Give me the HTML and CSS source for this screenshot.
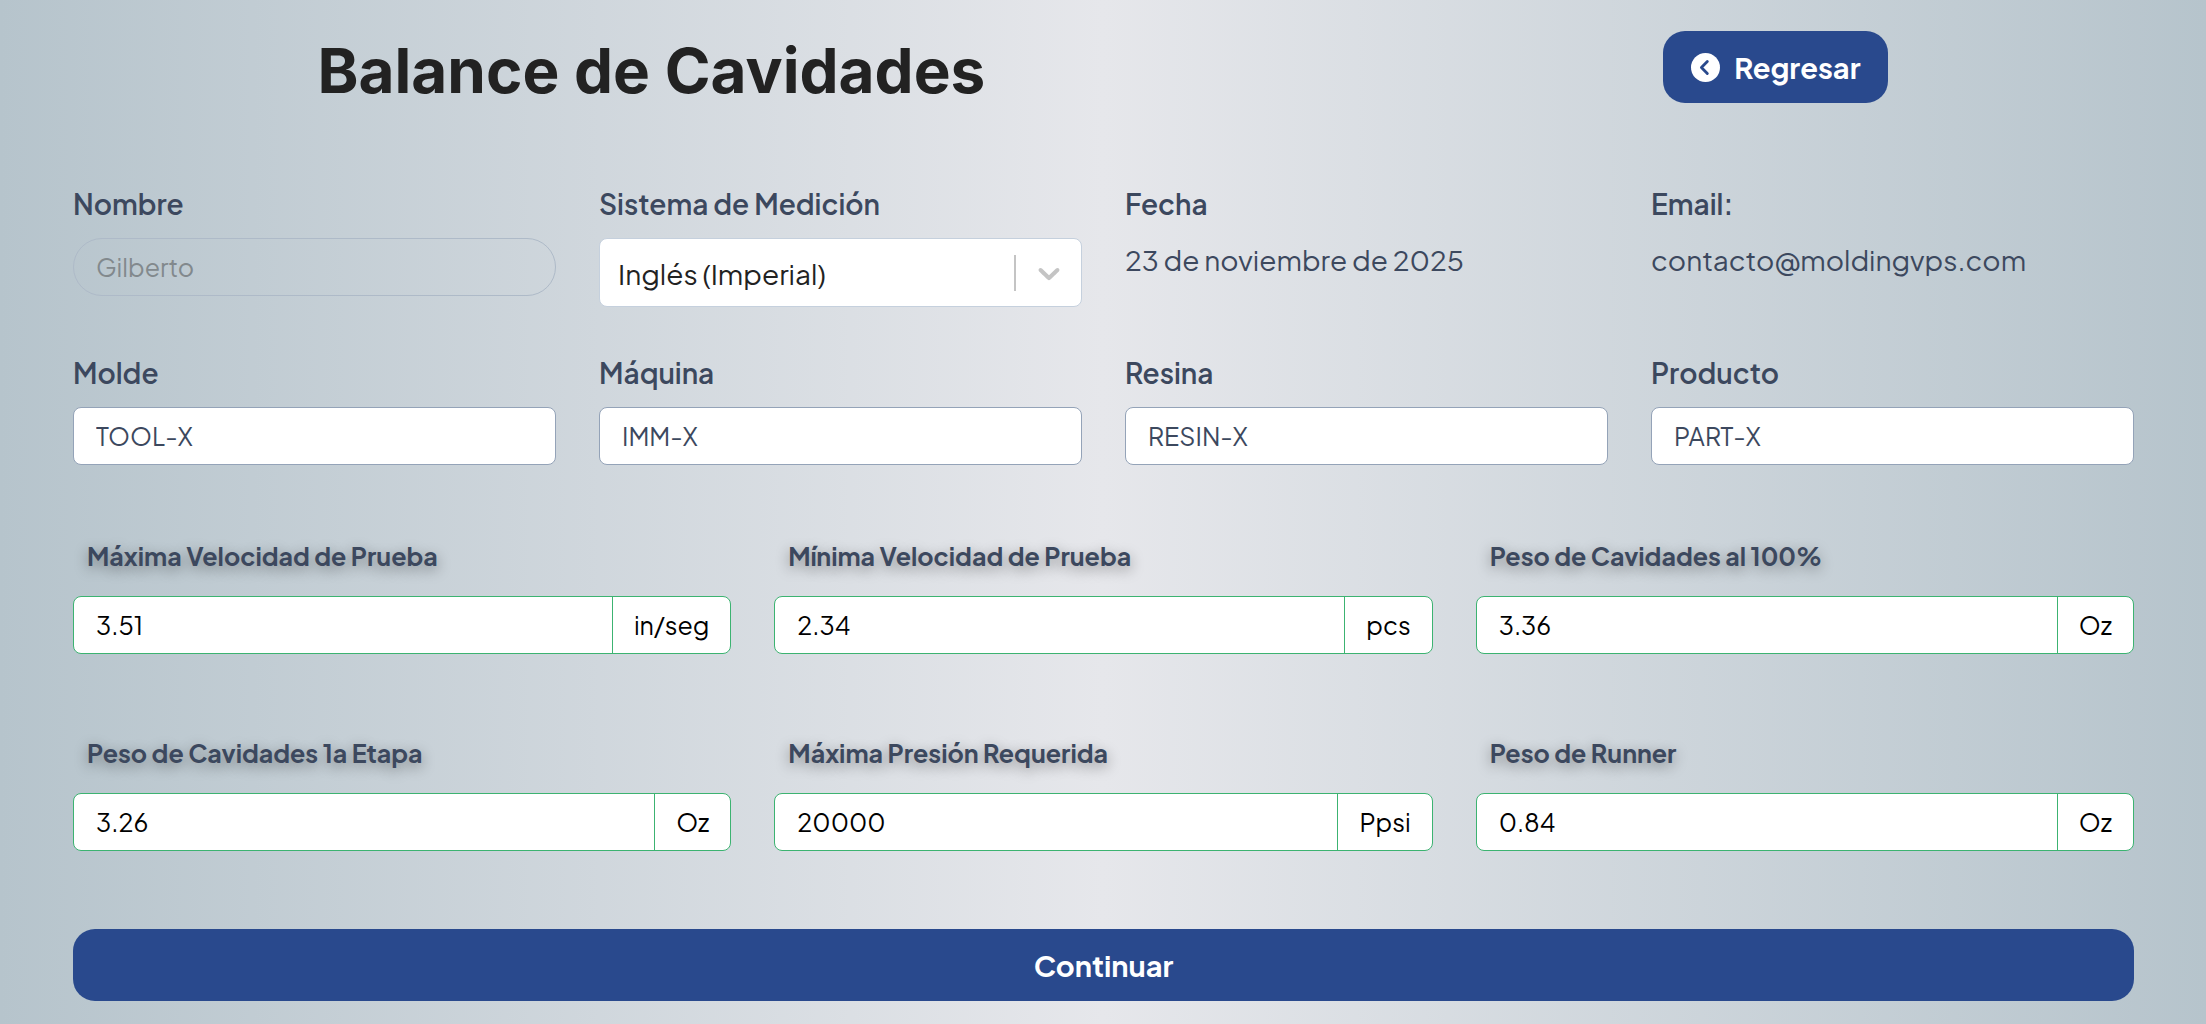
FILE: index.html
```html
<!DOCTYPE html>
<html lang="es">
<head>
<meta charset="utf-8">
<meta name="viewport" content="width=device-width, initial-scale=1">
<title>Balance de Cavidades</title>
<link rel="stylesheet" href="styles.css">
</head>
<body>
<header class="page-header">
  <h1 class="page-title">Balance de Cavidades</h1>
  <button class="btn btn-back" type="button">
    <svg class="btn-icon" viewBox="0 0 512 512" aria-hidden="true"><path fill="currentColor" d="M256 0a256 256 0 1 0 0 512A256 256 0 1 0 256 0z"/><path class="btn-icon-arrow" d="M288 152L184 256l104 104"/></svg>
    Regresar
  </button>
</header>
<form class="form">
  <div class="general">
    <div class="field">
      <label class="label" for="nombre">Nombre</label>
      <input class="input input-disabled" id="nombre" type="text" value="Gilberto" disabled>
    </div>
    <div class="field">
      <label class="label" for="sistema">Sistema de Medición</label>
      <div class="select-box">
        <select class="select" id="sistema"><option>Inglés (Imperial)</option></select>
        <span class="select-indicator"><svg class="chevron" viewBox="0 0 20 20" aria-hidden="true"><path fill="currentColor" d="M4.516 7.548c0.436-0.446 1.043-0.481 1.576 0l3.908 3.747 3.908-3.747c0.533-0.481 1.141-0.446 1.574 0 0.436 0.445 0.408 1.197 0 1.615-0.406 0.418-4.695 4.502-4.695 4.502-0.217 0.223-0.502 0.335-0.787 0.335s-0.57-0.112-0.789-0.335c0 0-4.287-4.084-4.695-4.502s-0.436-1.17 0-1.615z"/></svg></span>
      </div>
    </div>
    <div class="field">
      <span class="label">Fecha</span>
      <p class="value">23 de noviembre de 2025</p>
    </div>
    <div class="field">
      <span class="label">Email:</span>
      <p class="value">contacto@moldingvps.com</p>
    </div>
    <div class="field">
      <label class="label" for="molde">Molde</label>
      <input class="input" id="molde" type="text" value="TOOL-X">
    </div>
    <div class="field">
      <label class="label" for="maquina">Máquina</label>
      <input class="input" id="maquina" type="text" value="IMM-X">
    </div>
    <div class="field">
      <label class="label" for="resina">Resina</label>
      <input class="input" id="resina" type="text" value="RESIN-X">
    </div>
    <div class="field">
      <label class="label" for="producto">Producto</label>
      <input class="input" id="producto" type="text" value="PART-X">
    </div>
  </div>
  <div class="params">
    <div class="param">
      <label class="param-label" for="vmax">Máxima Velocidad de Prueba</label>
      <div class="measure"><input class="measure-input" id="vmax" type="text" value="3.51"><span class="unit">in/seg</span></div>
    </div>
    <div class="param">
      <label class="param-label" for="vmin">Mínima Velocidad de Prueba</label>
      <div class="measure"><input class="measure-input" id="vmin" type="text" value="2.34"><span class="unit">pcs</span></div>
    </div>
    <div class="param">
      <label class="param-label" for="peso100">Peso de Cavidades al 100%</label>
      <div class="measure"><input class="measure-input" id="peso100" type="text" value="3.36"><span class="unit">Oz</span></div>
    </div>
    <div class="param">
      <label class="param-label" for="peso1">Peso de Cavidades 1a Etapa</label>
      <div class="measure"><input class="measure-input" id="peso1" type="text" value="3.26"><span class="unit">Oz</span></div>
    </div>
    <div class="param">
      <label class="param-label" for="presion">Máxima Presión Requerida</label>
      <div class="measure"><input class="measure-input" id="presion" type="text" value="20000"><span class="unit">Ppsi</span></div>
    </div>
    <div class="param">
      <label class="param-label" for="runner">Peso de Runner</label>
      <div class="measure"><input class="measure-input" id="runner" type="text" value="0.84"><span class="unit">Oz</span></div>
    </div>
  </div>
  <button class="btn btn-submit" type="submit">Continuar</button>
</form>
</body>
</html>
```
FILE: styles.css
```css
* {
  box-sizing: border-box;
}

body {
  margin: 0;
  min-height: 100vh;
  background: linear-gradient(to right, #b6c4cc, #e6e7eb 50%, #b6c4cc);
  color: #3c485e;
  font-family: "Plus Jakarta Sans", Inter, "Liberation Sans", sans-serif;
  font-size: 28px;
  line-height: 43px;
}

.page-header {
  display: flex;
  flex-wrap: wrap;
  justify-content: space-around;
  align-items: flex-start;
  gap: 43px;
  padding-top: 31px;
}

.page-title {
  margin: 0;
  color: #222;
  font-family: Inter, "Liberation Sans", sans-serif;
  font-size: 62px;
  font-weight: 700;
  line-height: 80px;
}

.btn {
  display: flex;
  align-items: center;
  justify-content: center;
  gap: 14px;
  height: 72px;
  padding: 0 28px;
  border: 0;
  border-radius: 22px;
  background: #29498d;
  color: #fff;
  font: inherit;
  font-size: 29px;
  font-weight: 700;
  cursor: pointer;
}

.btn-icon {
  width: 29px;
  height: 29px;
}

.btn-icon-arrow {
  fill: none;
  stroke: #29498d;
  stroke-width: 50;
  stroke-linecap: round;
  stroke-linejoin: round;
}

.form {
  padding: 71px 72px 22px 73px;
}

.general {
  display: grid;
  grid-template-columns: repeat(4, minmax(0, 1fr));
  gap: 44px 43px;
}

.field {
  display: flex;
  flex-direction: column;
}

.label {
  margin-bottom: 13px;
  font-weight: 600;
}

.value {
  margin: 0;
}

.input {
  width: 100%;
  height: 58px;
  padding: 0 22px;
  border: 1px solid #94a3b8;
  border-radius: 8px;
  background: #fff;
  color: inherit;
  font: inherit;
  font-size: 25px;
}

.input-disabled {
  border-color: #aebac8;
  border-radius: 29px;
  background: transparent;
  color: #82898d;
}

.select-box {
  display: grid;
  align-items: center;
}

.select {
  grid-area: 1 / 1;
  width: 100%;
  height: 69px;
  padding: 2px 86px 0 18px;
  border: 1px solid #c5d0dd;
  border-radius: 8px;
  background: #fff;
  color: #222;
  font: inherit;
  appearance: none;
}

.select-indicator {
  grid-area: 1 / 1;
  justify-self: end;
  display: flex;
  padding: 0 15px;
  border-left: 2px solid #c4c4c4;
  color: #c4c4c4;
  pointer-events: none;
}

.chevron {
  width: 36px;
  height: 36px;
}

.params {
  display: grid;
  grid-template-columns: repeat(3, minmax(0, 1fr));
  gap: 79px 43px;
  padding: 71px 0 78px;
}

.param {
  display: flex;
  flex-direction: column;
  gap: 20px;
}

.param-label {
  padding-left: 14px;
  font-size: 25px;
  font-weight: 700;
  line-height: 40px;
  text-shadow: 0 4px 14px rgba(0, 0, 0, 0.4);
}

.measure {
  display: flex;
  height: 58px;
  overflow: hidden;
  border: 1px solid #3cb371;
  border-radius: 8px;
  background: #fff;
  color: #000;
  font-size: 25px;
}

.measure-input {
  flex: 1;
  min-width: 0;
  padding: 0 22px;
  border: 0;
  background: none;
  color: inherit;
  font: inherit;
}

.unit {
  display: flex;
  align-items: center;
  padding: 0 21px;
  border-left: 1px solid #3cb371;
}

.btn-submit {
  width: 100%;
}

@media (max-width: 1200px) {
  .general,
  .params {
    grid-template-columns: repeat(2, minmax(0, 1fr));
  }
}
```
